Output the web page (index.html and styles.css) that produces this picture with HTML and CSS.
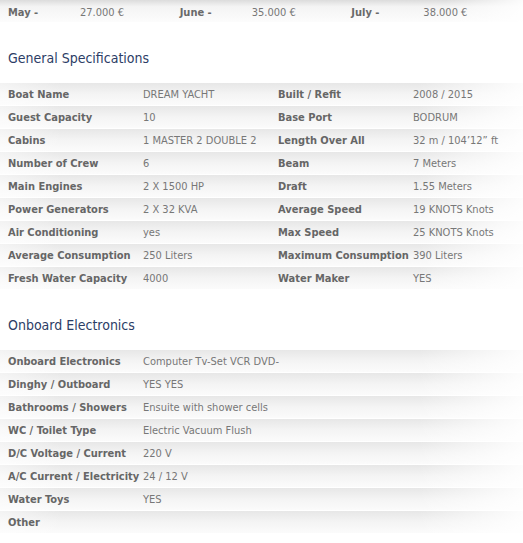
FILE: index.html
```html
<!DOCTYPE html>
<html>
<head>
<meta charset="utf-8">
<link rel="stylesheet" href="styles.css">
</head>
<body>
<div class="prices">
  <div class="price"><span class="plabel">May -</span><span class="pval">27.000 €</span></div>
  <div class="price"><span class="plabel">June -</span><span class="pval">35.000 €</span></div>
  <div class="price"><span class="plabel">July -</span><span class="pval">38.000 €</span></div>
</div>

<h2 class="heading">General Specifications</h2>
<div class="specs four">
  <div class="row"><span class="k">Boat Name</span><span class="v">DREAM YACHT</span><span class="k">Built / Refit</span><span class="v">2008 / 2015</span></div>
  <div class="row"><span class="k">Guest Capacity</span><span class="v">10</span><span class="k">Base Port</span><span class="v">BODRUM</span></div>
  <div class="row"><span class="k">Cabins</span><span class="v">1 MASTER 2 DOUBLE 2</span><span class="k">Length Over All</span><span class="v">32 m / 104’12” ft</span></div>
  <div class="row"><span class="k">Number of Crew</span><span class="v">6</span><span class="k">Beam</span><span class="v">7 Meters</span></div>
  <div class="row"><span class="k">Main Engines</span><span class="v">2 X 1500 HP</span><span class="k">Draft</span><span class="v">1.55 Meters</span></div>
  <div class="row"><span class="k">Power Generators</span><span class="v">2 X 32 KVA</span><span class="k">Average Speed</span><span class="v">19 KNOTS Knots</span></div>
  <div class="row"><span class="k">Air Conditioning</span><span class="v">yes</span><span class="k">Max Speed</span><span class="v">25 KNOTS Knots</span></div>
  <div class="row"><span class="k">Average Consumption</span><span class="v">250 Liters</span><span class="k">Maximum Consumption</span><span class="v">390 Liters</span></div>
  <div class="row"><span class="k">Fresh Water Capacity</span><span class="v">4000</span><span class="k">Water Maker</span><span class="v">YES</span></div>
</div>

<h2 class="heading">Onboard Electronics</h2>
<div class="specs two">
  <div class="row"><span class="k">Onboard Electronics</span><span class="v">Computer Tv-Set VCR DVD-</span></div>
  <div class="row"><span class="k">Dinghy / Outboard</span><span class="v">YES YES</span></div>
  <div class="row"><span class="k">Bathrooms / Showers</span><span class="v">Ensuite with shower cells</span></div>
  <div class="row"><span class="k">WC / Toilet Type</span><span class="v">Electric Vacuum Flush</span></div>
  <div class="row"><span class="k">D/C Voltage / Current</span><span class="v">220 V</span></div>
  <div class="row"><span class="k">A/C Current / Electricity</span><span class="v">24 / 12 V</span></div>
  <div class="row"><span class="k">Water Toys</span><span class="v">YES</span></div>
  <div class="row"><span class="k">Other</span><span class="v"></span></div>
</div>
</body>
</html>
```

FILE: styles.css
```css
html, body {
  margin: 0;
  padding: 0;
  background: #fff;
}
body {
  font-family: "DejaVu Sans Condensed", "DejaVu Sans", sans-serif;
  font-size: 11px;
  color: #777;
  overflow: hidden;
}
.prices {
  display: flex;
  height: 22px;
  padding-left: 8px;
  background: linear-gradient(to right, rgba(255,255,255,0) 85%, rgba(255,255,255,0.9)),
              linear-gradient(#dcdcdc, #f4f4f4 30%, #fcfcfc);
}
.price {
  display: flex;
  width: 180px;
  line-height: 26px;
}
.plabel {
  width: 72px;
  font-weight: bold;
  color: #6a6a6a;
}
.pval {
  color: #777;
}
.heading {
  margin: 0;
  padding: 26px 8px 14px;
  line-height: 20px;
  font-size: 14px;
  font-weight: normal;
  color: #2c3d66;
}
.specs .row {
  display: grid;
  height: 21px;
  padding-top: 1px;
  border-top: 1px solid #fff;
  padding-left: 8px;
  align-items: center;
  background: linear-gradient(to right, rgba(255,255,255,0.5), rgba(255,255,255,0) 12%, rgba(255,255,255,0) 80%, rgba(255,255,255,0.9)),
              linear-gradient(#e7e7e7, #f4f4f4 50%, #fbfbfb);
}
.specs.four .row {
  grid-template-columns: 135px 135px 135px 1fr;
}
.specs.two .row {
  grid-template-columns: 135px 1fr;
}
.k {
  font-weight: bold;
  color: #666;
  white-space: nowrap;
}
.v {
  color: #777;
  white-space: nowrap;
}
```
